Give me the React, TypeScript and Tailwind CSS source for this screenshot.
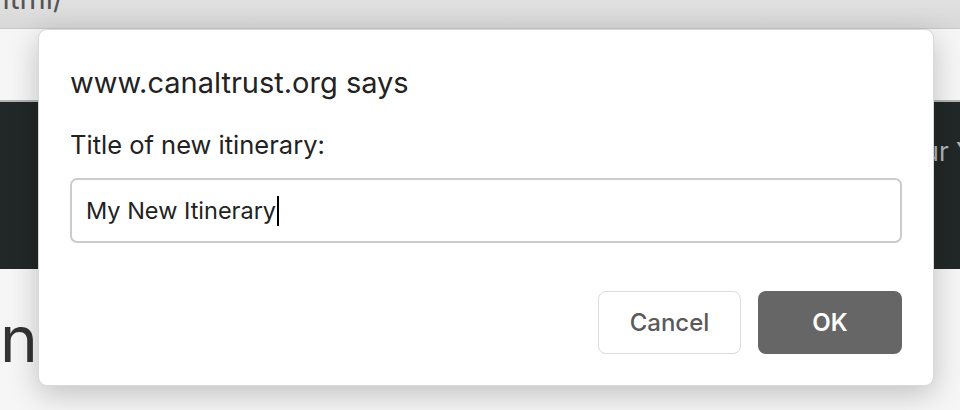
const font = "font-['Inter','Liberation_Sans',sans-serif]";

const PromptDialog = () => (
  <div className="absolute left-[38px] top-[29px] flex h-[357px] w-[896px] flex-col rounded-[9px] border border-black/15 bg-white px-[31px] pt-[35px] shadow-[0_8px_30px_rgba(0,0,0,0.22)]">
    <div className="text-[29px] leading-[36px] text-[#222]">www.canaltrust.org says</div>
    <div className="mt-[28px] text-[25.5px] leading-[32px] text-[#222]">Title of new itinerary:</div>
    <div className="mt-[17px] flex h-[65px] items-center rounded-[7px] border-2 border-[#cbcbcb] pl-[14px] text-[23.5px] text-[#222]">
      <span>My New Itinerary</span>
      <span className="ml-[1px] h-[30px] w-[2px] bg-black" />
    </div>
    <div className="mt-[48px] flex justify-end gap-[17px]">
      <button className="h-[63px] w-[143px] rounded-[8px] border border-[#dcdcdc] bg-white text-[24px] font-medium text-[#5a5a5a]">
        Cancel
      </button>
      <button className="h-[63px] w-[144px] rounded-[8px] bg-[#666666] text-[24px] font-semibold text-white">
        OK
      </button>
    </div>
  </div>
);

export default function App() {
  return (
    <div className={`relative h-[410px] w-[960px] overflow-hidden bg-[#f6f6f6] ${font}`}>
      <div className="h-[29px] overflow-hidden border-b border-[#c8c8c8] bg-gradient-to-b from-[#e0e0e0] to-[#d8d8d8]">
        <span className="-mt-[20px] ml-[-8px] block text-[30px] leading-[36px] text-[#555]">html/</span>
      </div>
      <div className="h-[71px]" />
      <div className="h-[169px] overflow-hidden border-t-2 border-[#b4b4b4] bg-[#222827] pt-[34px]">
        <span className="ml-[908px] block whitespace-nowrap text-[26px] leading-[32px] text-[#b5b5b5]">our Your</span>
      </div>
      <div className="ml-0 mt-[32px] text-[64px] leading-[76px] text-[#333]">n</div>
      <PromptDialog />
    </div>
  );
}
